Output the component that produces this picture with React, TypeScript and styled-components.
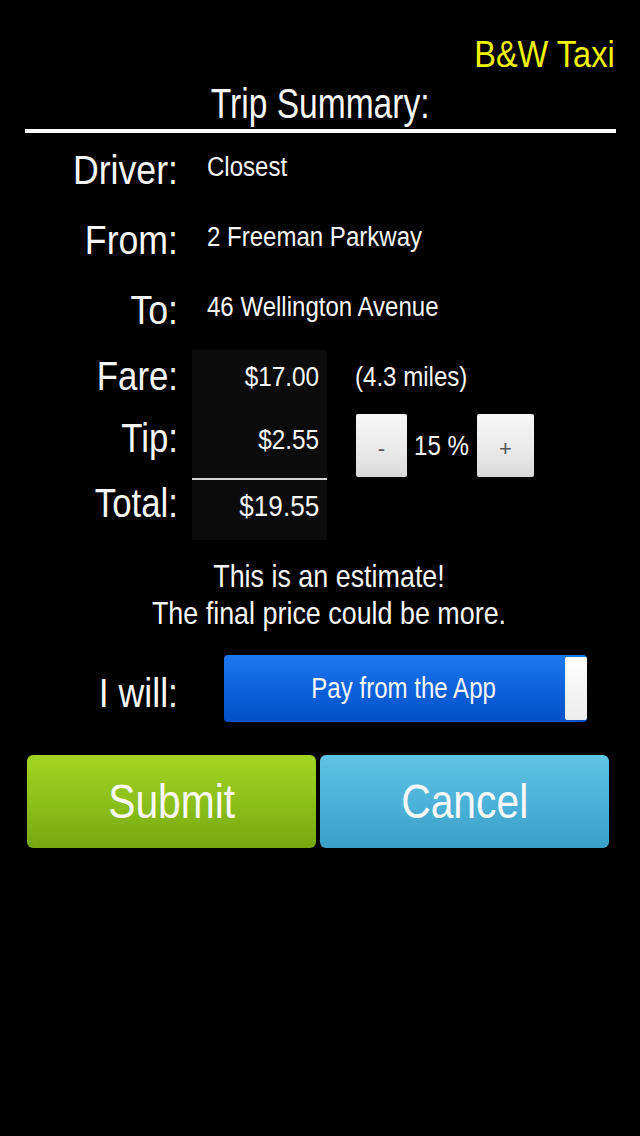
import styled, { createGlobalStyle, css } from 'styled-components';

const GlobalStyle = createGlobalStyle`
  html, body {
    margin: 0;
    padding: 0;
    background: #000;
  }
  body {
    font-family: "Liberation Sans", Arial, sans-serif;
    color: #f6f6f6;
  }
`;

// the screen's typeface is a condensed grotesque, squeeze Arial metrics to match
const narrow = (scale: number, origin: string) => css`
  transform: scaleX(${scale});
  transform-origin: ${origin} center;
`;

const trip = {
  driver: 'Closest',
  from: '2 Freeman Parkway',
  to: '46 Wellington Avenue',
  fare: '$17.00',
  miles: '(4.3 miles)',
  tip: '$2.55',
  tipPercent: 15,
  total: '$19.55',
};

export default function App() {
  return (
    <>
      <GlobalStyle />
      <S.Screen>
        <S.Brand>B&amp;W Taxi</S.Brand>
        <S.Title>Trip Summary:</S.Title>
        <S.Divider />

        <S.Details>
          <S.Label>Driver:</S.Label>
          <S.Value>{trip.driver}</S.Value>
          <S.Label>From:</S.Label>
          <S.Value>{trip.from}</S.Value>
          <S.Label>To:</S.Label>
          <S.Value>{trip.to}</S.Value>
        </S.Details>

        <S.FareGrid>
          <S.Panel />
          <S.FareLabel $row={1} $offset={3}>Fare:</S.FareLabel>
          <S.Amount $row={1} $offset={11}>{trip.fare}</S.Amount>
          <S.Miles>{trip.miles}</S.Miles>

          <S.FareLabel $row={2} $offset={1}>Tip:</S.FareLabel>
          <S.Amount $row={2} $offset={10}>{trip.tip}</S.Amount>
          <S.TipControls>
            <S.StepButton $width={51}>-</S.StepButton>
            <S.TipValue>{trip.tipPercent} %</S.TipValue>
            <S.StepButton $width={57}>+</S.StepButton>
          </S.TipControls>

          <S.Rule />

          <S.FareLabel $row={4} $offset={0}>Total:</S.FareLabel>
          <S.Amount $row={4} $offset={9} $size={30}>{trip.total}</S.Amount>
        </S.FareGrid>

        <S.Estimate>
          This is an estimate!
          <br />
          The final price could be more.
        </S.Estimate>

        <S.PayRow>
          <S.PayLabel>I will:</S.PayLabel>
          <S.Toggle>
            <S.ToggleText>Pay from the App</S.ToggleText>
            <S.Thumb />
          </S.Toggle>
        </S.PayRow>

        <S.Actions>
          <S.ActionButton $tone="green">
            <S.ActionText>Submit</S.ActionText>
          </S.ActionButton>
          <S.ActionButton $tone="blue">
            <S.ActionText>Cancel</S.ActionText>
          </S.ActionButton>
        </S.Actions>
      </S.Screen>
    </>
  );
}

const tones = {
  green: 'linear-gradient(180deg, #a3d424 0%, #8cc01a 50%, #76a80f 100%)',
  blue: 'linear-gradient(180deg, #62c4e4 0%, #4cb2d9 50%, #3aa0c9 100%)',
};

const S = {
  Screen: styled.div`
    width: 640px;
    min-height: 1136px;
    box-sizing: border-box;
    padding-top: 35px;
    display: flex;
    flex-direction: column;
    background: #000;
  `,
  Brand: styled.div`
    align-self: flex-end;
    margin-right: 25px;
    font-size: 37px;
    line-height: 40px;
    color: #f2f200;
    ${narrow(0.88, 'right')}
  `,
  Title: styled.h1`
    align-self: center;
    margin: 3px 0 0;
    font-size: 43px;
    line-height: 50px;
    font-weight: 400;
    ${narrow(0.78, 'center')}
  `,
  Divider: styled.div`
    margin: 1px 24px 0 25px;
    height: 4px;
    background: #fff;
  `,
  Details: styled.div`
    margin-top: 13px;
    display: grid;
    grid-template-columns: 178px 1fr;
    column-gap: 29px;
    row-gap: 22px;
    align-items: start;
  `,
  Label: styled.div`
    text-align: right;
    font-size: 41px;
    line-height: 48px;
    ${narrow(0.87, 'right')}
  `,
  Value: styled.div`
    margin-top: 5px;
    font-size: 27px;
    line-height: 32px;
    ${narrow(0.89, 'left')}
  `,
  FareGrid: styled.div`
    margin-top: 16px;
    display: grid;
    grid-template-columns: 178px 135px auto;
    grid-template-rows: 64px 64px 2px 60px;
    column-gap: 14px;
    align-items: start;
  `,
  Panel: styled.div`
    grid-column: 2;
    grid-row: 1 / 5;
    align-self: stretch;
    background: #0b0b0b;
  `,
  FareLabel: styled.div<{ $row: number; $offset: number }>`
    grid-column: 1;
    grid-row: ${(p) => p.$row};
    margin-top: ${(p) => p.$offset}px;
    text-align: right;
    font-size: 40px;
    line-height: 46px;
    ${narrow(0.87, 'right')}
  `,
  Amount: styled.div<{ $row: number; $offset: number; $size?: number }>`
    grid-column: 2;
    grid-row: ${(p) => p.$row};
    margin-top: ${(p) => p.$offset}px;
    padding-right: 9px;
    text-align: right;
    font-size: ${(p) => p.$size ?? 28}px;
    line-height: ${(p) => (p.$size ?? 28) + 4}px;
    ${narrow(0.87, 'right')}
  `,
  Miles: styled.div`
    grid-column: 3;
    grid-row: 1;
    margin: 11px 0 0 14px;
    font-size: 28px;
    line-height: 32px;
    ${narrow(0.86, 'left')}
  `,
  TipControls: styled.div`
    grid-column: 3;
    grid-row: 2;
    margin-left: 15px;
    display: flex;
    align-items: center;
  `,
  StepButton: styled.button<{ $width: number }>`
    width: ${(p) => p.$width}px;
    height: 63px;
    padding: 6px 0 0;
    border: none;
    border-radius: 2px;
    background: linear-gradient(180deg, #f7f7f7 0%, #e9e9e9 60%, #d9d9d9 100%);
    font-family: inherit;
    font-size: 22px;
    color: #555;
  `,
  TipValue: styled.span`
    width: 55px;
    margin: 0 8px 0 7px;
    font-size: 28px;
    line-height: 32px;
    white-space: pre;
    ${narrow(0.86, 'left')}
  `,
  Rule: styled.div`
    grid-column: 2;
    grid-row: 3;
    height: 2px;
    background: #d4d4d4;
  `,
  Estimate: styled.p`
    margin: 18px 0 0;
    padding-left: 18px;
    text-align: center;
    font-size: 32px;
    line-height: 37px;
    ${narrow(0.84, '329px')}
  `,
  PayRow: styled.div`
    margin-top: 23px;
    display: grid;
    grid-template-columns: 178px 363px;
    column-gap: 46px;
    align-items: center;
  `,
  PayLabel: styled.div`
    padding-top: 8px;
    text-align: right;
    font-size: 41px;
    line-height: 48px;
    ${narrow(0.87, 'right')}
  `,
  Toggle: styled.div`
    height: 67px;
    box-sizing: border-box;
    padding: 2px 0;
    display: flex;
    border-radius: 4px;
    background: linear-gradient(180deg, #1f78ee 0%, #0e62dc 50%, #0050c6 100%);
  `,
  ToggleText: styled.div`
    flex: 1;
    padding-left: 22px;
    text-align: center;
    font-size: 29px;
    line-height: 63px;
    ${narrow(0.83, 'center')}
  `,
  Thumb: styled.div`
    width: 22px;
    border-radius: 2px;
    background: linear-gradient(180deg, #ffffff 0%, #ececec 100%);
  `,
  Actions: styled.div`
    margin-top: 33px;
    padding-left: 27px;
    display: grid;
    grid-template-columns: 289px 289px;
    column-gap: 4px;
  `,
  ActionButton: styled.button<{ $tone: 'green' | 'blue' }>`
    height: 93px;
    padding: 0;
    border: none;
    border-radius: 6px;
    background: ${(p) => tones[p.$tone]};
    font-family: inherit;
    font-size: 48px;
    color: #f8f8f8;
  `,
  ActionText: styled.span`
    display: inline-block;
    ${narrow(0.85, 'center')}
  `,
};
